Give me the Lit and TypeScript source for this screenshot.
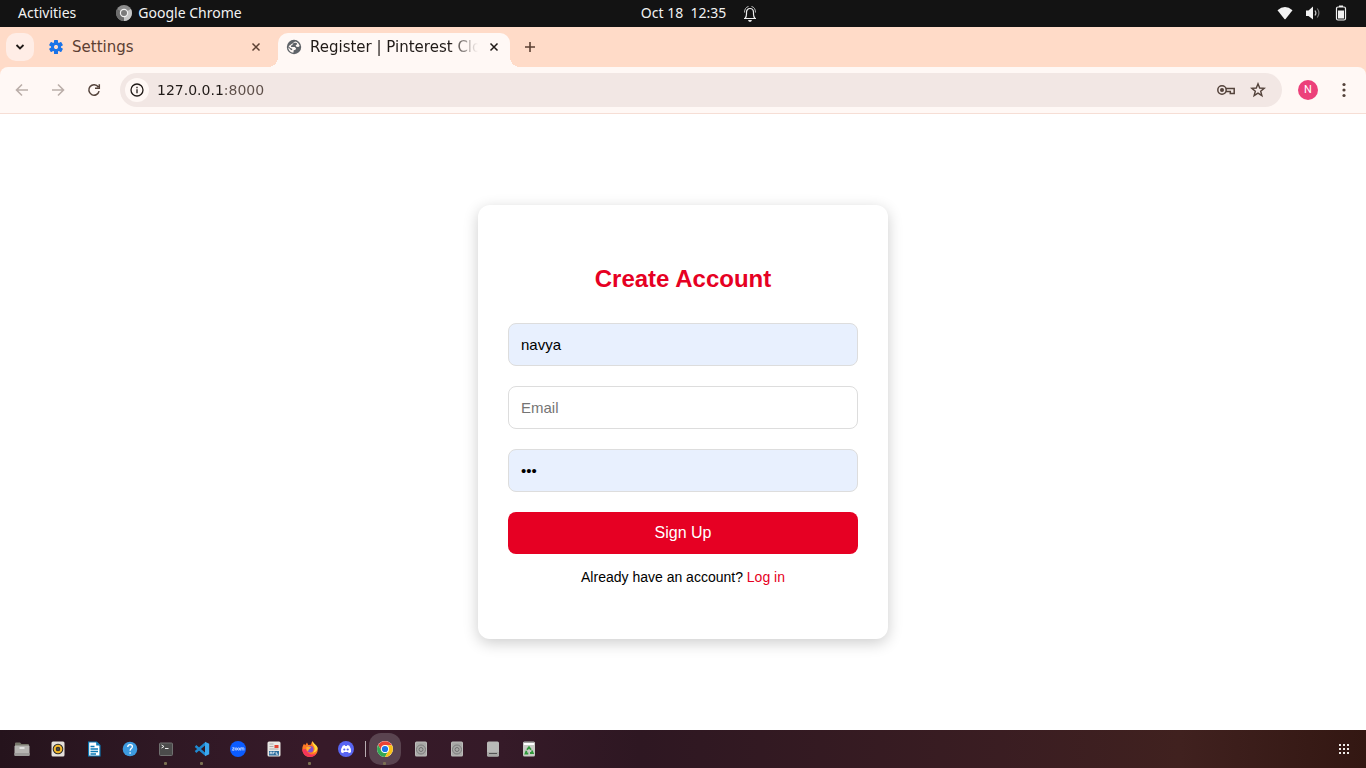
import { LitElement, html, css, svg } from "lit";
import { customElement } from "lit/decorators.js";

const icon = (w: number, h: number, body: unknown) =>
  html`<svg width=${w} height=${h} viewBox="0 0 ${w} ${h}" aria-hidden="true">${body}</svg>`;

const gearTeeth = [0, 60, 120, 180, 240, 300];

@customElement("top-bar")
class TopBar extends LitElement {
  static styles = css`
    :host {
      display: grid;
      grid-template-columns: 1fr auto 1fr;
      align-items: center;
      height: 27px;
      padding: 0 17px 0 18px;
      background: #131313;
      color: #f2f2f2;
      font: 14px/26px "Noto Sans", "Open Sans", sans-serif;
    }
    svg { display: block; }
    .group { display: flex; align-items: center; }
    .left { gap: 40px; }
    .app { gap: 6px; }
    .center { gap: 16px; padding-left: 32px; }
    .right { justify-content: flex-end; gap: 12px; padding-bottom: 1px; }
    button { border: 0; padding: 0 0 1px; background: none; color: inherit; font: inherit; white-space: nowrap; }
  `;
  render() {
    return html`
      <div class="group left">
        <button>Activities</button>
        <button class="group app">
          ${icon(16, 16, svg`<circle cx="8" cy="8" r="8" fill="#8c8c8c"/><path d="M8 8 14.900 4A8 8 0 0 1 8 16z" fill="#c6c6c6"/><path d="M8 8 1.100 4A8 8 0 0 0 8 16z" fill="#6c6c6c"/><circle cx="8" cy="8" r="4.200" fill="#f0f0f0"/><circle cx="8" cy="8" r="3" fill="#7b7b7b"/>`)}
          Google Chrome
        </button>
      </div>
      <div class="group center">
        <button>Oct 18&nbsp; 12:35</button>
        ${icon(16, 18, svg`<path d="M2 13.500H14M3 13.500Q4.500 12 4.500 9V7.500C4.500 5 6 3.500 8 3.500s3.500 1.500 3.500 4V9q0 3 1.500 4.500" fill="none" stroke="#eee" stroke-width="1.200"/><path d="M2.500 7.500C2.500 4 4 2 6.500 1.500M13.500 7.500C13.500 4 12 2 9.500 1.500" fill="none" stroke="#bbb"/><path d="M6 15h4L9 16.800H7z" fill="#eee"/>`)}
      </div>
      <div class="group right">
        ${icon(16, 16, svg`<path d="M.5 5.200Q8-1.400 15.500 5.200L8.600 14Q8 14.600 7.400 14z" fill="#f2f2f2"/>`)}
        ${icon(16, 16, svg`<path d="M1 5.500h2.500L8 1.500v13L3.500 11H1z" fill="#f2f2f2"/><path d="M10 5.500q1.800 2.500 0 5" fill="none" stroke="#ccc" stroke-width="1.200"/><path d="M12.300 3.500q3.200 4.500 0 9" fill="none" stroke="#777" stroke-width="1.200"/>`)}
        ${icon(16, 16, svg`<rect x="3.500" y="2" width="9" height="13" rx="1.500" fill="none" stroke="#f2f2f2" stroke-width="1.200"/><path d="M6 .5h4V2H6zM5 5.500h6v8H5z" fill="#f2f2f2"/>`)}
      </div>
    `;
  }
}

@customElement("browser-tabs")
class BrowserTabs extends LitElement {
  static styles = css`
    :host {
      display: flex;
      height: 40px;
      padding-left: 6px;
      background: #ffdbc8;
      font: 15px/20px "DejaVu Sans", sans-serif;
      color: #5c4033;
    }
    svg { display: block; flex: none; }
    button {
      display: grid;
      place-items: center;
      flex: none;
      padding: 0;
      border: 0;
      background: none;
      color: inherit;
    }
    .search { width: 28px; height: 28px; margin-top: 6px; border-radius: 10px; background: #ffede6; color: #201a17; }
    .tab {
      display: flex;
      align-items: center;
      width: 232px;
      height: 28px;
      margin-top: 6px;
      padding: 0 8px;
      box-sizing: border-box;
    }
    .idle { margin: 6px 6px 0 6px; }
    .active {
      position: relative;
      height: 34px;
      padding-bottom: 6px;
      border-radius: 10px 10px 0 0;
      background: #fff8f5;
      color: #201a17;
    }
    .active::before,
    .active::after {
      content: "";
      position: absolute;
      bottom: 0;
      width: 10px;
      height: 10px;
    }
    .active::before { right: 100%; background: radial-gradient(circle at 0 0, transparent 10px, #fff8f5 10px); }
    .active::after { left: 100%; background: radial-gradient(circle at 100% 0, transparent 10px, #fff8f5 10px); }
    .title {
      flex: 1;
      min-width: 0;
      height: 20px;
      margin: 0 0 1px 8px;
      overflow: hidden;
      white-space: nowrap;
    }
    .active .title { mask-image: linear-gradient(to left, transparent, #000 28px); }
    .close { width: 32px; height: 20px; margin-right: -8px; }
    .new { width: 28px; height: 28px; margin: 6px 0 0 6px; }
  `;
  render() {
    const close = icon(10, 10, svg`<path d="M1.500 1.500l7 7M8.500 1.500l-7 7" stroke="currentColor" stroke-width="1.500"/>`);
    return html`
      <button class="search" aria-label="Search tabs">
        ${icon(10, 8, svg`<path d="M1.500 2 5 5.500 8.500 2" fill="none" stroke="currentColor" stroke-width="1.800"/>`)}
      </button>
      <div class="tab idle">
        ${icon(16, 16, svg`<g fill="#1a73e8">${gearTeeth.map((a) => svg`<rect x="6" y="1" width="4" height="5" rx=".6" transform="rotate(${a} 8 8)"/>`)}</g><circle cx="8" cy="8" r="3.700" fill="none" stroke="#1a73e8" stroke-width="2.600"/>`)}
        <span class="title">Settings</span>
        <button class="close" aria-label="Close Settings">${close}</button>
      </div>
      <div class="tab active">
        ${icon(16, 16, svg`<circle cx="8" cy="8" r="7.200" fill="#5f6368"/><path d="M9.400 2.300 8.800 3.800 6.700 4.400 6.500 6 4.800 6.700l.4 1.200h3.600l1.300 1.600-.6 1.300-1.800.5-.3 2.400C4.500 13.500 2.300 11.200 2.200 8.200L5 11l1.200.2V9.800L4.300 8.900 2.500 7.200M9.500 2.400c2.200.7 3.800 2.500 4.200 4.700l-1.400 1-1.900-.3-.8-1.500 1.600-1-.5-1.300-1.800-.2z" fill="#fff8f5"/>`)}
        <span class="title">Register | Pinterest Clone</span>
        <button class="close" aria-label="Close Register">${close}</button>
      </div>
      <button class="new" aria-label="New tab">
        ${icon(12, 12, svg`<path d="M6 1v10M1 6h10" stroke="currentColor" stroke-width="1.600"/>`)}
      </button>
    `;
  }
}

@customElement("browser-toolbar")
class BrowserToolbar extends LitElement {
  static styles = css`
    :host { display: block; background: #ffdbc8; color: #54433b; }
    svg { display: block; }
    .bar {
      display: flex;
      align-items: center;
      height: 46px;
      padding: 0 8px;
      border-bottom: 1px solid #f6ded5;
      border-radius: 8px 8px 0 0;
      background: #fff8f5;
    }
    button {
      display: grid;
      place-items: center;
      flex: none;
      width: 28px;
      height: 28px;
      padding: 0;
      border: 0;
      border-radius: 50%;
      background: none;
      color: inherit;
    }
    button:disabled { color: #bbaea9; }
    .nav { display: flex; gap: 8px; margin-right: 12px; }
    .address {
      display: flex;
      flex: 1;
      align-items: center;
      height: 34px;
      padding: 0 10px 0 5px;
      border-radius: 17px;
      background: #f2e7e4;
    }
    .info { width: 24px; height: 24px; background: #fff8f5; color: #201a17; }
    input {
      flex: 1;
      min-width: 0;
      height: 24px;
      margin: 0 8px;
      padding: 0;
      border: 0;
      outline: 0;
      font: 14px/24px "DejaVu Sans", sans-serif;
      color: transparent;
      background: linear-gradient(to right, #201a17 67px, #5c4d47 67px);
      background-clip: text;
      -webkit-background-clip: text;
    }
    .actions { display: flex; gap: 4px; }
    .avatar {
      width: 20px;
      height: 20px;
      margin: 0 12px 0 16px;
      background: #ec407a;
      color: #fff;
      font: 11px/20px Roboto, sans-serif;
    }
  `;
  render() {
    return html`
      <div class="bar">
        <div class="nav">
          <button disabled aria-label="Back">${icon(14, 14, svg`<path d="M13 7H2M7 1.500 1.500 7 7 12.500" fill="none" stroke="currentColor" stroke-width="1.600"/>`)}</button>
          <button disabled aria-label="Forward">${icon(14, 14, svg`<path d="M1 7h11M7 1.500 12.500 7 7 12.500" fill="none" stroke="currentColor" stroke-width="1.600"/>`)}</button>
          <button aria-label="Reload">${icon(14, 14, svg`<path d="M11.300 4A5.200 5.200 0 1 0 12.100 8.200M12.300 1.200v4.100H8" fill="none" stroke="currentColor" stroke-width="1.500"/>`)}</button>
        </div>
        <div class="address">
          <button class="info" aria-label="View site information">${icon(14, 14, svg`<circle cx="7" cy="7" r="6" fill="none" stroke="currentColor" stroke-width="1.300"/><path d="M7 6.200v4M7 3.800v1.400" stroke="currentColor" stroke-width="1.300"/>`)}</button>
          <input aria-label="Address" .value=${"127.0.0.1:8000"} spellcheck="false" />
          <div class="actions">
            <button aria-label="Passwords">${icon(20, 14, svg`<circle cx="6" cy="7" r="4.200" fill="none" stroke="currentColor" stroke-width="1.500"/><circle cx="6" cy="7" r="2" fill="currentColor"/><path d="M10 5.400h8.200v5.200h-3.900V8.600H10" fill="none" stroke="currentColor" stroke-width="1.500"/>`)}</button>
            <button aria-label="Bookmark this tab">${icon(16, 16, svg`<path d="M8 1.800 9.700 6l4.500.3-3.500 2.900 1.200 4.500L8 11.200l-3.900 2.500 1.200-4.500L1.800 6.300 6.300 6z" fill="none" stroke="currentColor" stroke-width="1.400"/>`)}</button>
          </div>
        </div>
        <button class="avatar" aria-label="Profile">N</button>
        <button aria-label="Menu">${icon(4, 16, svg`<g fill="currentColor"><circle cx="2" cy="2.500" r="1.600"/><circle cx="2" cy="8" r="1.600"/><circle cx="2" cy="13.500" r="1.600"/></g>`)}</button>
      </div>
    `;
  }
}

@customElement("register-page")
class RegisterPage extends LitElement {
  static styles = css`
    :host {
      display: grid;
      place-items: center;
      background: #fff;
      color: #000;
      font-family: "Liberation Sans", Arial, sans-serif;
    }
    form {
      display: flex;
      flex-direction: column;
      gap: 20px;
      width: 350px;
      padding: 60px 30px 54px;
      border-radius: 12px;
      background: #fff;
      box-shadow: 0 4px 15px rgba(0, 0, 0, 0.2);
    }
    h2 { margin: 0 0 10px; font-size: 24px; line-height: 28px; text-align: center; color: #e60023; }
    input {
      box-sizing: border-box;
      width: 100%;
      height: 43px;
      padding: 12px;
      border: 1px solid #ddd;
      border-radius: 8px;
      background: #fff;
      color: #000;
      font: 15px "Liberation Sans", Arial, sans-serif;
    }
    input::placeholder { color: #757575; }
    .filled { background: #e8f0fe; }
    button {
      height: 42px;
      border: 0;
      border-radius: 8px;
      background: #e60023;
      color: #fff;
      font: 16px "Liberation Sans", Arial, sans-serif;
    }
    p { margin: -5px 0 0; font-size: 14px; line-height: 16px; text-align: center; }
    a { color: #e60023; text-decoration: none; }
  `;
  render() {
    return html`
      <form>
        <h2>Create Account</h2>
        <input class="filled" type="text" aria-label="Username" .value=${"navya"} />
        <input type="email" aria-label="Email" placeholder="Email" />
        <input class="filled" type="password" aria-label="Password" .value=${"abc"} />
        <button type="button">Sign Up</button>
        <p>Already have an account? <a href="#login">Log in</a></p>
      </form>
    `;
  }
}

interface DockItem { name: string; art: unknown; running?: boolean; active?: boolean; }

const disk = svg`<rect x="2" y=".5" width="12" height="15" rx="1.500" fill="#bcbcba"/><rect x="3" y="1.500" width="10" height="13" rx="1" fill="#a9a9a7"/><circle cx="8" cy="8.500" r="4.500" fill="none" stroke="#7c7c7c"/><circle cx="8" cy="8.500" r="2" fill="none" stroke="#707070"/>`;

const items: DockItem[] = [
  { name: "Files", art: svg`<path d="M1 2.500q0-1 1-1h4l1.500 1.500H14q1 0 1 1V9H1z" fill="#76766a"/><rect x=".5" y="4.500" width="15" height="10.500" rx="1" fill="#b5b4b1"/><path d="M.5 12h15v2q0 1-1 1h-13q-1 0-1-1z" fill="#9c9b99"/><path d="M5.500 7h5" stroke="#fff" stroke-width="1.200"/>` },
  { name: "Rhythmbox", art: svg`<rect x="1.500" y=".5" width="13" height="15" rx="1.500" fill="#e5e1dc"/><circle cx="8" cy="8" r="5.300" fill="#2b2b2b"/><circle cx="8" cy="8" r="3.300" fill="none" stroke="#f3b72c" stroke-width="2"/><circle cx="8" cy="8" r="1.500" fill="#4d4a45"/>` },
  { name: "Writer", art: svg`<path d="M2.600 1h8L14 4.400V15H2.600z" fill="#fff" stroke="#0b79b5" stroke-width="1.200"/><path d="M10.200 1v3.600H14z" fill="#0b79b5"/><path d="M4.500 5.500h4M4.500 8h7.500M4.500 10.500h7.500M4.500 13h5.500" stroke="#0b79b5" stroke-width="1.400"/>` },
  { name: "Help", art: svg`<circle cx="8" cy="8" r="7.300" fill="#3d9be0"/><path d="M5.700 6Q6 3.600 8.200 3.700q2.300.2 2.200 2-.1 1.200-1.300 1.900Q8.100 8.300 8.100 9.800M8.100 11.300v1.500" fill="none" stroke="#fff" stroke-width="1.300"/>` },
  { name: "Terminal", running: true, art: svg`<rect x="1.500" y="2" width="13" height="12.500" rx="1" fill="#4b4b4b" stroke="#707070"/><path d="M3.500 4l2.500 1.500L3.500 7M7 7.500h3.500" fill="none" stroke="#eee"/>` },
  { name: "Visual Studio Code", running: true, art: svg`<path d="M1.500 5 11.500 13.500M1.500 11 11.500 2.500" stroke="#1f8ad2" stroke-width="2.300" fill="none"/><path d="M11 .8 15.200 2.700V13.300L11 15.200z" fill="#3ba8ee"/>` },
  { name: "Zoom", art: svg`<circle cx="8" cy="8" r="8" fill="#0b5cff"/><path d="M2.300 6.800h2L2.300 9.200h2M10.300 9.600V7.500q0-.8.900-.8t.9.800v2M12.100 7.500q0-.8.900-.8t.9.800v2" stroke="#dce8ff" stroke-width=".8" fill="none"/><circle cx="6.100" cy="8" r="1.100" stroke="#dce8ff" stroke-width=".8" fill="none"/><circle cx="8.600" cy="8" r="1.100" stroke="#dce8ff" stroke-width=".8" fill="none"/>` },
  { name: "News", art: svg`<rect x="1.500" y=".5" width="13" height="15" rx="1.500" fill="#e9e7e4"/><path d="M3.500 3h4M3.500 5.500h4M3.500 8h9" stroke="#a5a5a5" stroke-width=".9"/><rect x="8.500" y="4" width="4" height="3" fill="#e44332"/><rect x="3" y="10" width="10" height="4.500" fill="#2c6d9e"/><path d="M4.200 13.200v-2h1.600v2M7.200 13.200v-2h1.600M10.200 11v2.200h2" stroke="#fff" stroke-width=".8" fill="none"/>` },
  { name: "Firefox", running: true, art: svg`<path d="M.3 8.500C.2 5.500 1.300 4 2 2.700L3.200 4.300 5 1.600 6.300 4 8.800 3.700 10.200.2c1 .7 1.600 1.700 2 2.800 2.300 1.700 3.800 3.800 3.500 6.300C15.200 13.200 12.200 16 8 16S.5 13 .3 8.500z" fill="#ff7a24"/><path d="M10.200.2c-.2 2 .7 3.500 1.800 5.200 1.300 2.300.5 5.200-1.600 6.200 3.500-.1 5.700-2.900 5.100-5.200C14.700 4.200 12.700 3.500 10.200.2z" fill="#ffdb3c"/><path d="M.3 8.500C.6 13 4 16 8 16c3 0 5.200-1.300 6.500-3.400C10 15 5 12.500 4 8z" fill="#f3345b"/><circle cx="8.200" cy="8.300" r="3.200" fill="#8250cf"/><path d="M4.300 6.200q2.500-1.500 5 .3L6.800 8.400 6 10.600Q4 9 4.300 6.200z" fill="#ffae32"/>` },
  { name: "Discord", art: svg`<circle cx="8" cy="8" r="8" fill="#5865f2"/><path d="M3 11.300Q2.700 7.300 4.700 4.700l2-.6.5.8h1.700l.5-.8 2 .6Q13.300 7.300 13 11.300l-2.200.9-.7-1.100H5.900l-.7 1.100z" fill="#fff"/><circle cx="6.300" cy="8.500" r="1.100" fill="#5865f2"/><circle cx="9.700" cy="8.500" r="1.100" fill="#5865f2"/>` },
];

const recent: DockItem[] = [
  { name: "Google Chrome", running: true, active: true, art: svg`<circle cx="8" cy="8" r="8" fill="#fff"/><path d="M8 4.200h6.900A8 8 0 0 0 1.100 4l3.500 6z" fill="#ea4335"/><path d="M1.100 4A8 8 0 0 0 8 16l3.400-6L8 12 4.600 10z" fill="#34a853"/><path d="M14.900 4.200H8L11.400 10 8 16A8 8 0 0 0 14.900 4.200z" fill="#fbc116"/><circle cx="8" cy="8" r="4" fill="#fff"/><circle cx="8" cy="8" r="3.100" fill="#1a73e8"/>` },
  { name: "Disk 1", art: disk },
  { name: "Disk 2", art: disk },
  { name: "Volume", art: svg`<rect x="2" y=".5" width="12" height="15" rx="1.500" fill="#b9b9b7"/><path d="M2 11h12v3q0 1.500-1.500 1.500h-9q-1.500 0-1.500-1.500z" fill="#a8a8a6"/><path d="M4 12.500h8" stroke="#555"/>` },
  { name: "Trash", art: svg`<rect x="2" y=".5" width="12" height="15" rx="1.500" fill="#c9cbc6"/><path d="M3 1h10v3H3z" fill="#fff"/><path d="M3 1.200h10" stroke="#555" stroke-width=".8"/><path d="M6 8.800 8 6.200l2 2.600M10.800 9.500l1 2.500H9M7.300 12.500H4.500l1-2.700" fill="none" stroke="#2f9a3a" stroke-width="1.800"/>` },
];

@customElement("app-dock")
class AppDock extends LitElement {
  static styles = css`
    :host {
      display: flex;
      align-items: center;
      height: 38px;
      padding: 0 4px;
      background: linear-gradient(to right, #25131c, #2f1824 160px, #371a29 320px, #351a28 500px, #2e1722 640px, #3a1d22 1000px, #40211f 1180px, #331712);
    }
    svg { display: block; }
    .item {
      position: relative;
      display: grid;
      place-items: center;
      width: 32px;
      height: 32px;
      margin: 0 2px;
      padding: 0;
      border: 0;
      border-radius: 12px;
      background: none;
    }
    .active { background: #5a4450; }
    .running::after {
      content: "";
      position: absolute;
      bottom: 0;
      left: 14px;
      width: 3px;
      height: 3px;
      border-radius: 1px;
      background: #7b7052;
    }
    .divider { width: 1px; height: 16px; margin: 0 1px; background: #b8adb2; }
    .spacer { flex: 1; }
  `;
  item(i: DockItem) {
    return html`<button class="item ${i.active ? "active" : ""} ${i.running ? "running" : ""}" aria-label=${i.name}>${icon(16, 16, i.art)}</button>`;
  }
  render() {
    return html`
      ${items.map((i) => this.item(i))}
      <span class="divider"></span>
      ${recent.map((i) => this.item(i))}
      <span class="spacer"></span>
      <button class="item" aria-label="Show applications">
        ${icon(10, 10, [0, 4, 8].map((y) => [0, 4, 8].map((x) => svg`<rect x=${x} y=${y} width="2" height="2" fill="#f0eae8"/>`)))}
      </button>
    `;
  }
}

@customElement("app-root")
class AppRoot extends LitElement {
  static styles = css`
    :host { display: flex; flex-direction: column; min-height: 100vh; }
    .page { flex: 1; }
  `;
  render() {
    return html`
      <top-bar></top-bar>
      <browser-tabs></browser-tabs>
      <browser-toolbar></browser-toolbar>
      <register-page class="page"></register-page>
      <app-dock></app-dock>
    `;
  }
}
